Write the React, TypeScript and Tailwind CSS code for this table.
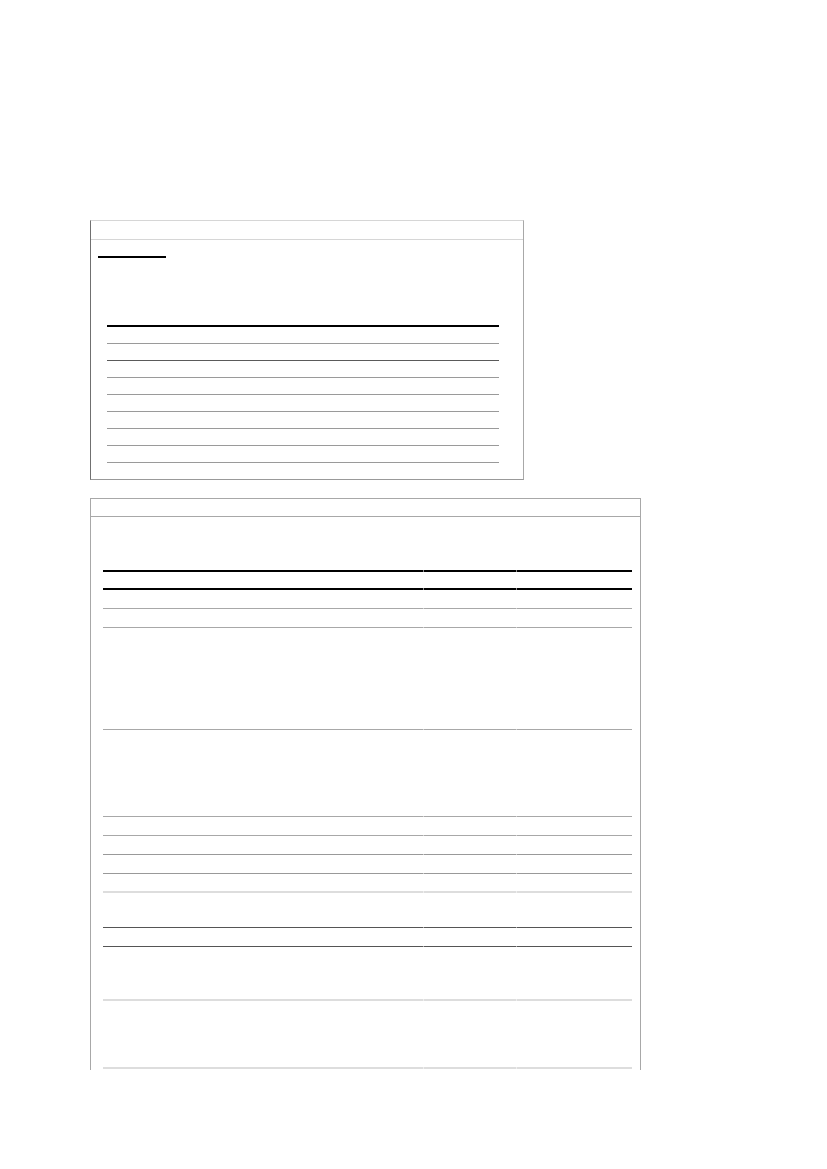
import React from "react";

type Line = { mt: string; h: string; color: string; gap: string };

const box1Lines: Line[] = [
  { mt: "mt-[67px]", h: "h-[2px]", color: "bg-[#000000]", gap: "" },
  { mt: "mt-[16px]", h: "h-px", color: "bg-[#9a9a9a]", gap: "" },
  { mt: "mt-[16px]", h: "h-px", color: "bg-[#5a5a5a]", gap: "" },
  { mt: "mt-[16px]", h: "h-px", color: "bg-[#9a9a9a]", gap: "" },
  { mt: "mt-[16px]", h: "h-px", color: "bg-[#9a9a9a]", gap: "" },
  { mt: "mt-[16px]", h: "h-px", color: "bg-[#9a9a9a]", gap: "" },
  { mt: "mt-[16px]", h: "h-px", color: "bg-[#9a9a9a]", gap: "" },
  { mt: "mt-[16px]", h: "h-px", color: "bg-[#9a9a9a]", gap: "" },
  { mt: "mt-[16px]", h: "h-px", color: "bg-[#9a9a9a]", gap: "" },
];

const box2Lines: Line[] = [
  { mt: "mt-[53px]", h: "h-[2px]", color: "bg-[#000000]", gap: "bg-[#8a8a8a]" },
  { mt: "mt-[16px]", h: "h-[2px]", color: "bg-[#000000]", gap: "bg-[#8a8a8a]" },
  { mt: "mt-[18px]", h: "h-px", color: "bg-[#a8a8a8]", gap: "bg-[#d0d0d0]" },
  { mt: "mt-[18px]", h: "h-px", color: "bg-[#a8a8a8]", gap: "bg-[#d0d0d0]" },
  { mt: "mt-[101px]", h: "h-px", color: "bg-[#a8a8a8]", gap: "bg-[#d0d0d0]" },
  { mt: "mt-[86px]", h: "h-px", color: "bg-[#a8a8a8]", gap: "bg-[#d0d0d0]" },
  { mt: "mt-[18px]", h: "h-px", color: "bg-[#a8a8a8]", gap: "bg-[#d0d0d0]" },
  { mt: "mt-[18px]", h: "h-px", color: "bg-[#999999]", gap: "bg-[#cccccc]" },
  { mt: "mt-[18px]", h: "h-px", color: "bg-[#999999]", gap: "bg-[#cccccc]" },
  { mt: "mt-[17px]", h: "h-[2px]", color: "bg-[#dddddd]", gap: "bg-[#eeeeee]" },
  { mt: "mt-[34px]", h: "h-px", color: "bg-[#555555]", gap: "bg-[#aaaaaa]" },
  { mt: "mt-[18px]", h: "h-px", color: "bg-[#555555]", gap: "bg-[#aaaaaa]" },
  { mt: "mt-[52px]", h: "h-[2px]", color: "bg-[#dddddd]", gap: "bg-[#eeeeee]" },
  { mt: "mt-[66px]", h: "h-[2px]", color: "bg-[#dddddd]", gap: "bg-[#eeeeee]" },
];

function Box1() {
  return (
    <div className="w-[434px] h-[260px] border-t border-b border-l border-r border-t-[#d6d6d6] border-l-[#707070] border-r-[#a8a8a8] border-b-[#999999] bg-white overflow-hidden">
      <div className="h-[19px] border-b border-[#d6d6d6]" />
      <div className="flex flex-col">
        <div className="ml-[7px] mt-[16px] w-[68px] h-[2px] bg-black" />
        <div className="ml-[16px] w-[392px] flex flex-col">
          {box1Lines.map((l, i) => (
            <div key={i} className={`${l.mt} ${l.h} ${l.color} w-full`} />
          ))}
        </div>
      </div>
    </div>
  );
}

function SegLine({ l }: { l: Line }) {
  return (
    <div className={`${l.mt} ${l.gap} flex gap-px w-full`}>
      <div className={`${l.h} ${l.color} w-[320px]`} />
      <div className={`${l.h} ${l.color} w-[92px]`} />
      <div className={`${l.h} ${l.color} flex-1`} />
    </div>
  );
}

function Box2() {
  return (
    <div className="mt-[18px] w-[551px] h-[572px] border-t border-l border-r border-[#a8a8a8] bg-white overflow-hidden">
      <div className="h-[18px] border-b border-[#a8a8a8]" />
      <div className="ml-[12px] w-[529px] flex flex-col">
        {box2Lines.map((l, i) => (
          <SegLine key={i} l={l} />
        ))}
      </div>
    </div>
  );
}

export default function App() {
  return (
    <div
      className="w-[827px] min-h-[1169px] bg-white pt-[220px] pl-[90px] flex flex-col"
      style={{ fontFamily: "'Liberation Sans', Arial, sans-serif" }}
    >
      <Box1 />
      <Box2 />
    </div>
  );
}
